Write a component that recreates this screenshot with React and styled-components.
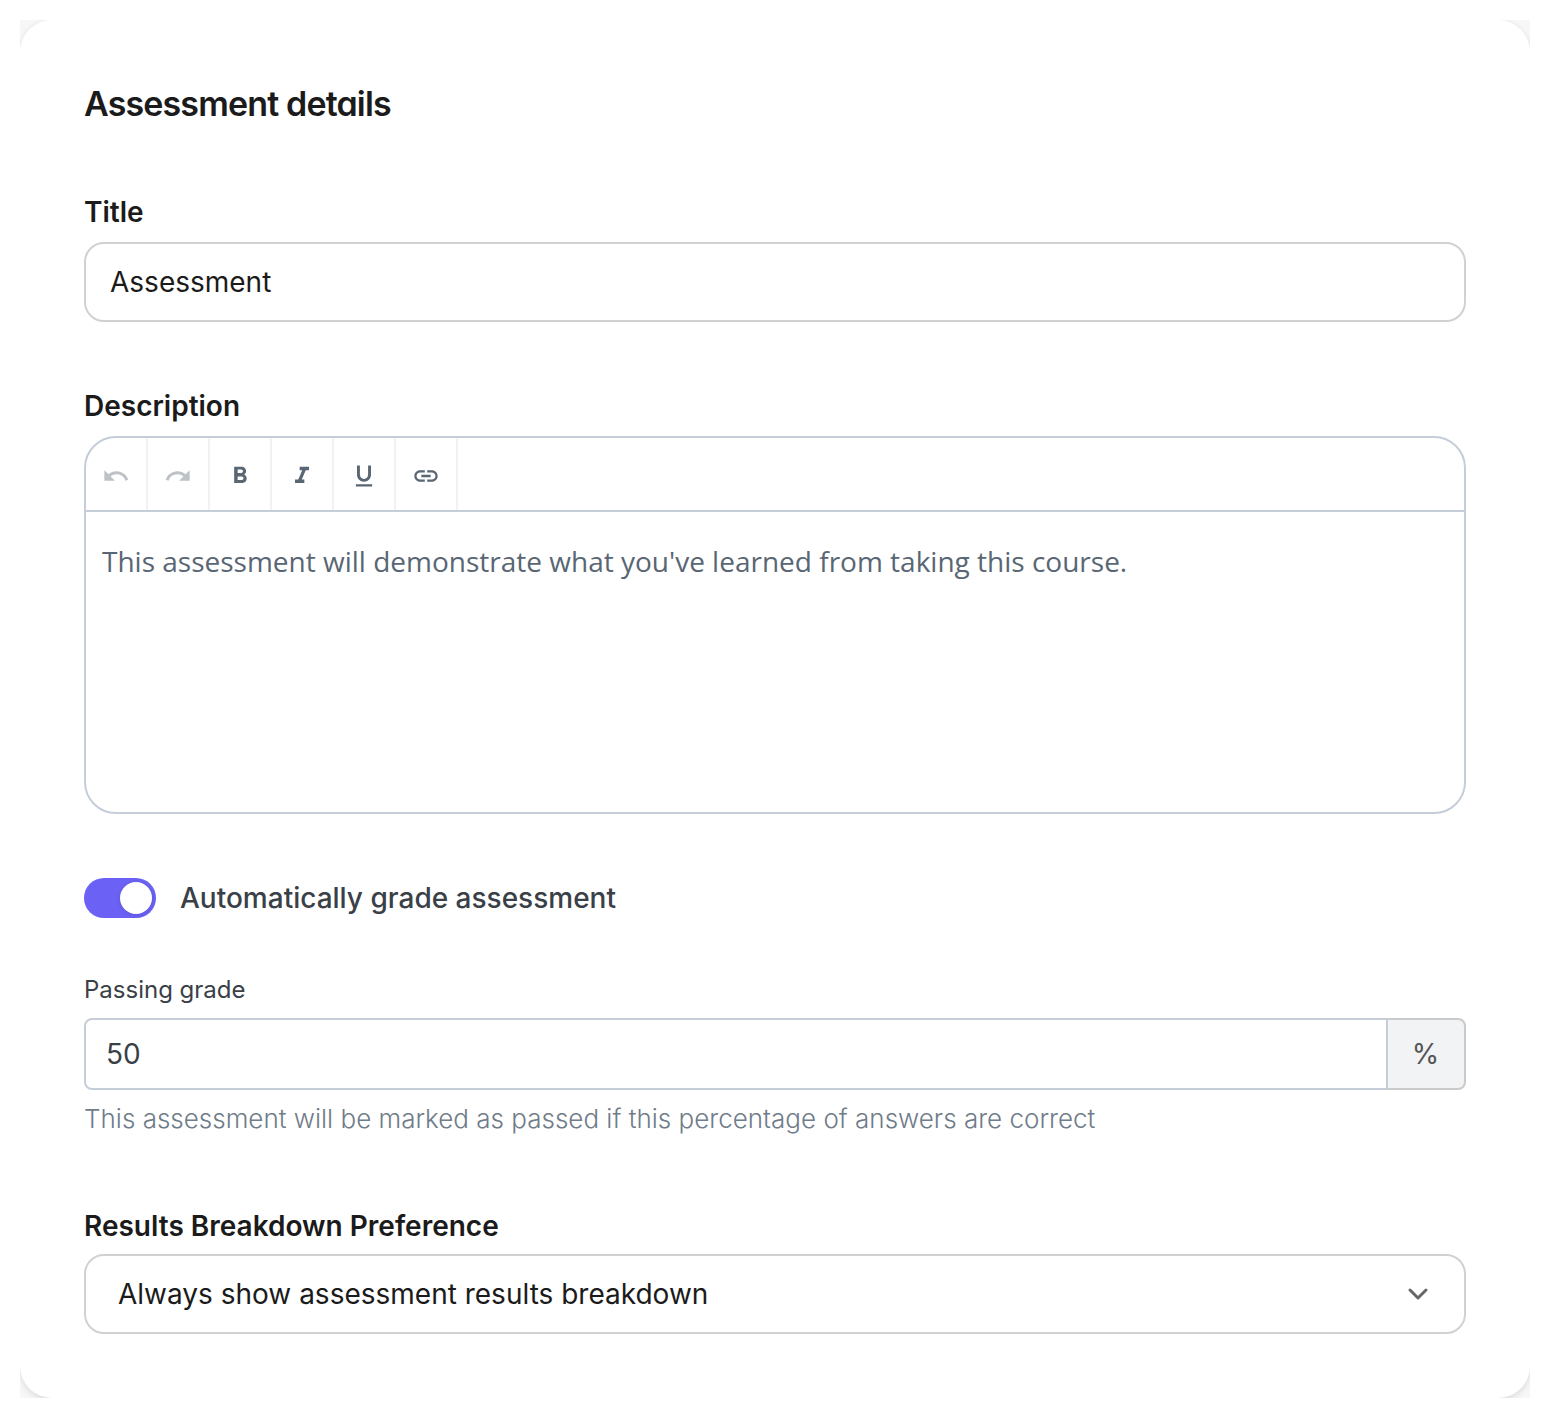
import React, { useState } from 'react'
import styled, { createGlobalStyle } from 'styled-components'
import {
  MdUndo,
  MdRedo,
  MdFormatBold,
  MdFormatItalic,
  MdFormatUnderlined,
  MdLink,
} from 'react-icons/md'

// Styling
const GlobalStyle = createGlobalStyle`
  * {
    box-sizing: border-box;
  }
  body {
    margin: 0;
    background: #fff;
    font-family: Inter, "Liberation Sans", sans-serif;
    color: #1b1b1b;
  }
`
const Page = styled.main`
  width: 1550px;
  height: 1418px;
  padding: 20px;
`
const Backdrop = styled.div`
  height: 1378px;
  background: #f7f7f7;
  overflow: hidden;
`
const Card = styled.section`
  height: 100%;
  padding: 62px 64px 64px;
  display: flex;
  flex-direction: column;
  background: #fff;
  border-radius: 32px;
  box-shadow: 0 2px 6px rgba(0, 0, 0, .12);
`
const Heading = styled.h1`
  margin: 0 0 68px;
  font-size: 34px;
  font-weight: 600;
  line-height: 44px;
  letter-spacing: -0.85px;
  font-feature-settings: "cv11";
`
const Field = styled.div`
  display: flex;
  flex-direction: column;
  margin-bottom: ${(props) => props.$gap || 0}px;
`
const Label = styled.label`
  margin-bottom: ${(props) => (props.$tight ? 10 : 12)}px;
  font-size: 28px;
  font-weight: 600;
  line-height: 36px;
`
const TextInput = styled.input`
  height: 80px;
  padding: 0 24px;
  border: 2px solid #d1d1d1;
  border-radius: 20px;
  outline: none;
  background: transparent;
  font: 400 28px Inter, sans-serif;
  color: #1b1b1b;
`
const Editor = styled.div`
  height: 378px;
  border: 2px solid #c5cdd9;
  border-radius: 32px;
  overflow: hidden;
`
const Toolbar = styled.div`
  display: flex;
  height: 74px;
  border-bottom: 2px solid #c5cdd9;
`
const ToolButton = styled.button`
  width: 62px;
  padding: 4px 0 0;
  display: flex;
  align-items: center;
  justify-content: center;
  border: 0;
  border-right: 2px solid #f1f1f2;
  background: none;
  font-size: 28px;
  color: #596673;

  &:disabled {
    color: #bdc2c7;
  }
`
const EditorBody = styled.div`
  padding: 29px 16px;
  font-family: "Open Sans", sans-serif;
  font-size: 28px;
  line-height: 40px;
  color: #596673;
`
const SwitchRow = styled.div`
  display: flex;
  align-items: center;
  gap: 24px;
  height: 40px;
  margin-bottom: 55px;
`
const Switch = styled.button`
  width: 72px;
  height: 40px;
  padding: 4px;
  display: flex;
  justify-content: ${(props) => (props.$on ? 'flex-end' : 'flex-start')};
  border: 0;
  border-radius: 20px;
  background: ${(props) => (props.$on ? '#6b61f4' : '#c5cdd9')};
`
const Knob = styled.span`
  width: 32px;
  height: 32px;
  border-radius: 50%;
  background: #fff;
  box-shadow: 0 1px 4px rgba(0, 0, 0, .12);
`
const SwitchLabel = styled.span`
  font-size: 28px;
  font-weight: 500;
  color: #3a4047;
`
const SmallLabel = styled.label`
  margin-bottom: 11px;
  font-size: 24px;
  line-height: 34px;
  color: #3a4047;
`
const GradeGroup = styled.div`
  display: flex;
  height: 72px;
`
const GradeInput = styled.input`
  flex: 1;
  min-width: 0;
  padding: 0 20px;
  border: 2px solid #c5cdd9;
  border-radius: 8px 0 0 8px;
  outline: none;
  background: transparent;
  font: 400 28px Inter, sans-serif;
  color: #3a4047;
`
const GradeUnit = styled.span`
  width: 78px;
  padding-right: 1px;
  display: flex;
  align-items: center;
  justify-content: center;
  border: 2px solid #cacaca;
  border-left: 0;
  border-radius: 0 8px 8px 0;
  background: #f2f3f5;
  font-size: 28px;
  color: #555;
`
const Hint = styled.p`
  margin: 11px 0 0;
  font-size: 26px;
  font-weight: 300;
  line-height: 36px;
  color: #6f7c89;
`
const Select = styled.button`
  height: 80px;
  padding: 0 32px;
  display: flex;
  align-items: center;
  justify-content: space-between;
  border: 2px solid #d1d1d1;
  border-radius: 20px;
  background: transparent;
  font: 400 28px Inter, sans-serif;
  color: #1b1b1b;
`
const Chevron = styled.svg`
  width: 28px;
  height: 28px;
  fill: none;
  stroke: #666;
  stroke-width: 3;
  stroke-linecap: round;
  stroke-linejoin: round;
`

const tools = [
  { name: 'Undo', Icon: MdUndo, disabled: true },
  { name: 'Redo', Icon: MdRedo, disabled: true },
  { name: 'Bold', Icon: MdFormatBold },
  { name: 'Italic', Icon: MdFormatItalic },
  { name: 'Underline', Icon: MdFormatUnderlined },
  { name: 'Link', Icon: MdLink },
]

function DescriptionEditor() {
  return (
    <Editor>
      <Toolbar>
        {tools.map(({ name, Icon, disabled }) => (
          <ToolButton key={name} aria-label={name} disabled={disabled}>
            <Icon />
          </ToolButton>
        ))}
      </Toolbar>
      <EditorBody>
        This assessment will demonstrate what you've learned from taking this course.
      </EditorBody>
    </Editor>
  )
}

function App() {
  const [title, setTitle] = useState('Assessment')
  const [autoGrade, setAutoGrade] = useState(true)
  const [grade, setGrade] = useState('50')

  return (
    <Page>
      <GlobalStyle />
      <Backdrop>
        <Card>
          <Heading>Assessment details</Heading>

          <Field $gap={66}>
            <Label htmlFor="title">Title</Label>
            <TextInput id="title" value={title} onChange={(e) => setTitle(e.target.value)} />
          </Field>

          <Field $gap={64}>
            <Label as="span">Description</Label>
            <DescriptionEditor />
          </Field>

          <SwitchRow>
            <Switch
              role="switch"
              aria-checked={autoGrade}
              $on={autoGrade}
              onClick={() => setAutoGrade(!autoGrade)}
            >
              <Knob />
            </Switch>
            <SwitchLabel>Automatically grade assessment</SwitchLabel>
          </SwitchRow>

          <Field $gap={71}>
            <SmallLabel htmlFor="grade">Passing grade</SmallLabel>
            <GradeGroup>
              <GradeInput id="grade" value={grade} onChange={(e) => setGrade(e.target.value)} />
              <GradeUnit>%</GradeUnit>
            </GradeGroup>
            <Hint>This assessment will be marked as passed if this percentage of answers are correct</Hint>
          </Field>

          <Field>
            <Label as="span" $tight>Results Breakdown Preference</Label>
            <Select>
              Always show assessment results breakdown
              <Chevron viewBox="0 0 28 28">
                <path d="M6 10l8 8 8-8" />
              </Chevron>
            </Select>
          </Field>
        </Card>
      </Backdrop>
    </Page>
  )
}

export default App
